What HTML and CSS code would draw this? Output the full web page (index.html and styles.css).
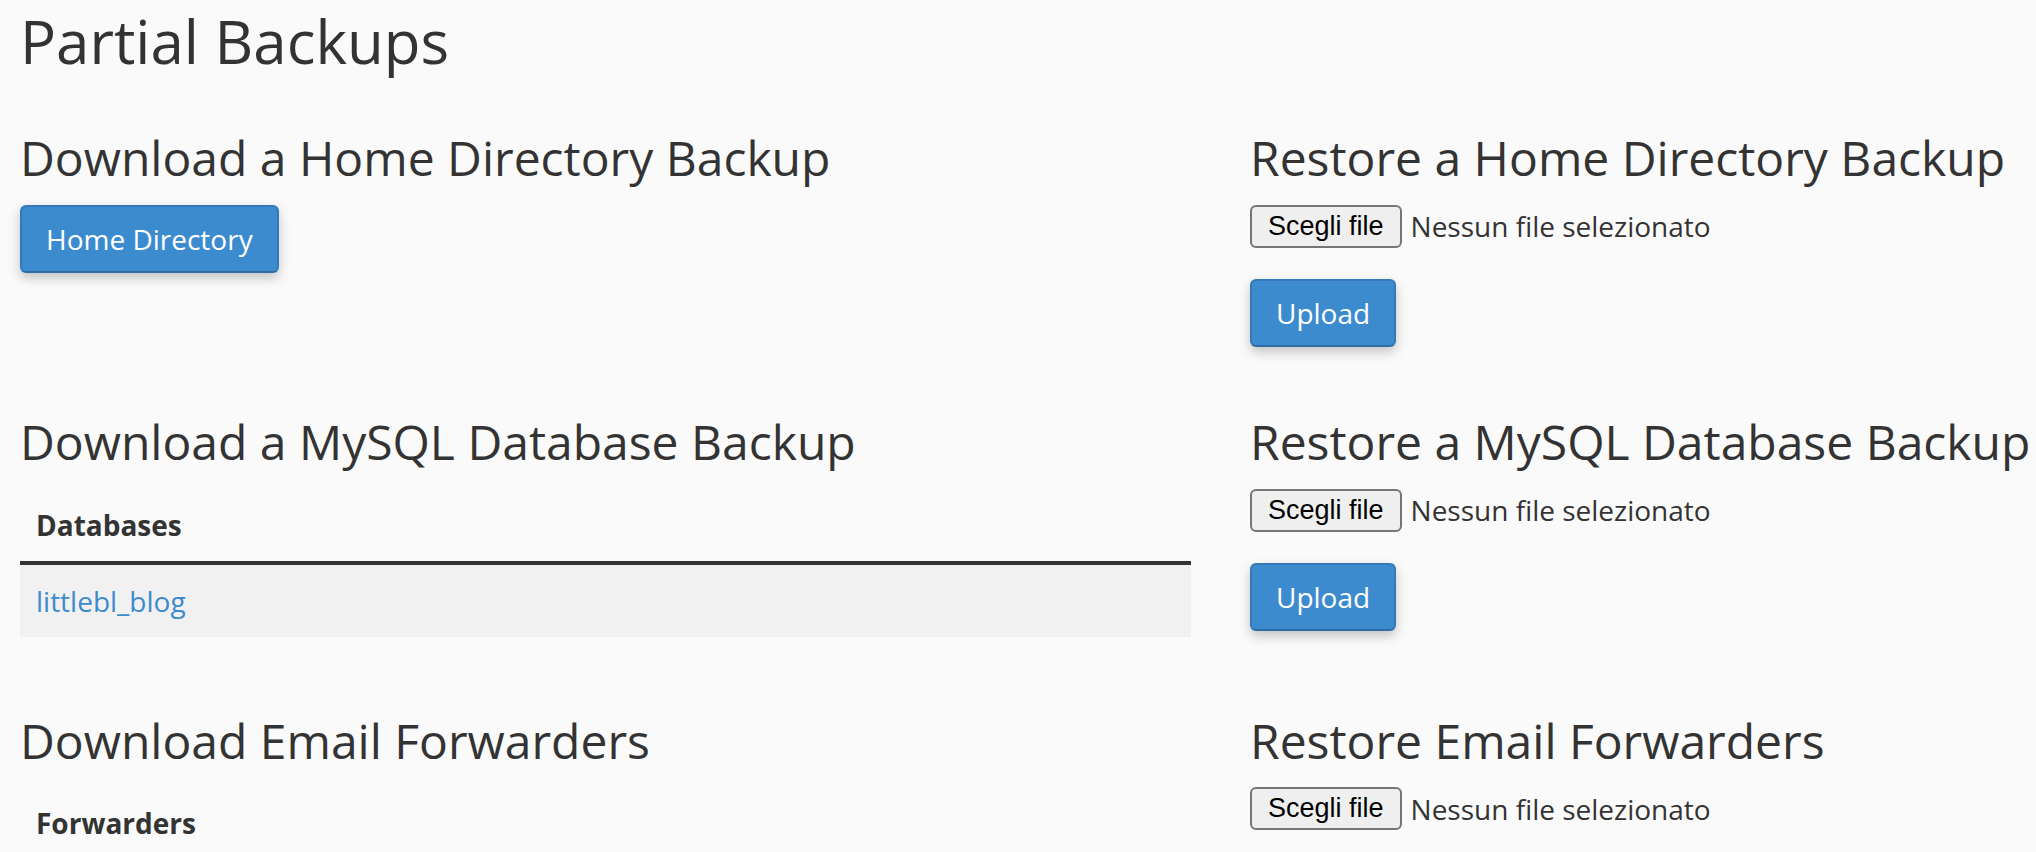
FILE: index.html
```html
<!DOCTYPE html>
<html lang="it">
<head>
<meta charset="utf-8">
<title>Partial Backups</title>
<link rel="stylesheet" href="styles.css">
</head>
<body>
<div class="page">
  <h1 class="title">Partial Backups</h1>

  <div class="section">
    <div class="col">
      <h2 class="heading">Download a Home Directory Backup</h2>
      <a class="btn" href="#">Home Directory</a>
    </div>
    <div class="col">
      <h2 class="heading">Restore a Home Directory Backup</h2>
      <form class="upload-form">
        <div class="file-row">
          <span class="file-btn">Scegli file</span>
          <span class="file-name">Nessun file selezionato</span>
        </div>
        <button type="button" class="btn upload">Upload</button>
      </form>
    </div>
  </div>

  <div class="section">
    <div class="col">
      <h2 class="heading">Download a MySQL Database Backup</h2>
      <table class="table">
        <thead><tr><th>Databases</th></tr></thead>
        <tbody><tr><td><a class="link" href="#">littlebl_blog</a></td></tr></tbody>
      </table>
    </div>
    <div class="col">
      <h2 class="heading">Restore a MySQL Database Backup</h2>
      <form class="upload-form">
        <div class="file-row">
          <span class="file-btn">Scegli file</span>
          <span class="file-name">Nessun file selezionato</span>
        </div>
        <button type="button" class="btn upload">Upload</button>
      </form>
    </div>
  </div>

  <div class="section">
    <div class="col">
      <h2 class="heading">Download Email Forwarders</h2>
      <table class="table">
        <thead><tr><th>Forwarders</th></tr></thead>
      </table>
    </div>
    <div class="col">
      <h2 class="heading">Restore Email Forwarders</h2>
      <form class="upload-form">
        <div class="file-row">
          <span class="file-btn">Scegli file</span>
          <span class="file-name">Nessun file selezionato</span>
        </div>
      </form>
    </div>
  </div>
</div>
</body>
</html>
```

FILE: styles.css
```css
html, body {
  margin: 0;
  padding: 0;
  background: #fafafa;
}

body {
  font-family: "Open Sans", "Liberation Sans", sans-serif;
  color: #333333;
  font-size: 28px;
  line-height: 40px;
  overflow: hidden;
  height: 852px;
}

.page {
  box-sizing: border-box;
  height: 852px;
  overflow: hidden;
  padding: 8px 0 0 20px;
  border-left: 2px solid #efefef;
  margin-left: -2px;
}

.title {
  font-size: 60px;
  line-height: 66px;
  font-weight: 400;
  margin: 0 0 58px 0;
  white-space: nowrap;
}

.section {
  display: grid;
  grid-template-columns: 1171px max-content;
  column-gap: 59px;
  align-items: start;
  margin-top: 40px;
}

.heading {
  font-size: 48px;
  line-height: 52.8px;
  font-weight: 400;
  margin: 0 0 20px 0;
  white-space: nowrap;
}

.btn {
  display: inline-block;
  box-sizing: border-box;
  height: 68px;
  padding: 12px 24px;
  font-family: "Open Sans", sans-serif;
  font-size: 28px;
  line-height: 40px;
  color: #ffffff;
  background: #3d8bcf;
  border: 2px solid #3679b8;
  border-bottom-color: #2f6ca6;
  border-radius: 6px;
  box-shadow: 0 5px 12px rgba(0, 0, 0, 0.22);
  text-decoration: none;
  cursor: pointer;
}

.upload-form {
  margin: 0 0 29px 0;
}

.file-row {
  display: flex;
  align-items: center;
  margin-top: 5px;
  height: 43px;
}

.file-btn {
  box-sizing: border-box;
  height: 43px;
  padding: 0 16px;
  font-family: "Liberation Sans", Arial, sans-serif;
  font-size: 27px;
  line-height: 39px;
  color: #000000;
  background: #efefef;
  border: 2px solid #767676;
  border-radius: 6px;
}

.file-name {
  margin-left: 9px;
  font-size: 28px;
  line-height: 40px;
  color: #333333;
  white-space: nowrap;
}

.upload {
  display: block;
  margin-top: 31px;
}

.table {
  width: 100%;
  border-collapse: separate;
  border-spacing: 0;
  margin: 0 0 38px 0;
}

.table th {
  text-align: left;
  font-weight: 700;
  padding: 16px;
  line-height: 40px;
  border-bottom: 4px solid #333333;
}

.table td {
  padding: 16px;
  line-height: 40px;
  background: #f1f1f1;
}

.link {
  color: #3d8bcf;
  text-decoration: none;
}
```
